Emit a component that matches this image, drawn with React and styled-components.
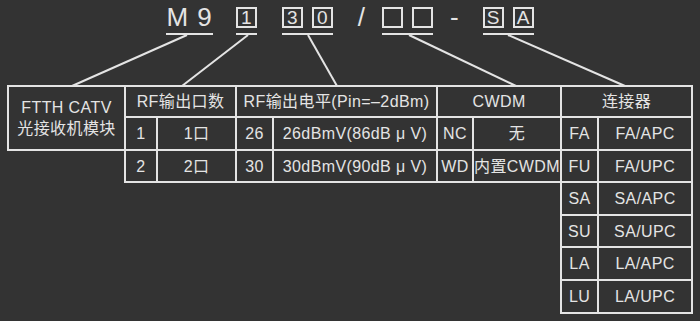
import React from 'react'
import styled, { createGlobalStyle } from 'styled-components';

const ink = '#e4e4e4';
const bg = '#333333';

const Global = createGlobalStyle`
  html, body {
    margin: 0;
    padding: 0;
    background: ${bg};
  }
`;

const Page = styled.div`
  width: 700px;
  height: 321px;
  overflow: hidden;
  background: ${bg};
  color: ${ink};
  font-family: "Liberation Sans", "Noto Sans CJK SC", sans-serif;
`;

const Header = styled.div`
  position: relative;
  height: 85px;
`;

const CodeRow = styled.div`
  display: flex;
  align-items: flex-start;
  justify-content: center;
  padding-top: 7px;
`;

const Segment = styled.div`
  display: flex;
  align-items: center;
  gap: 9px;
  height: 21px;
  padding: 0 0 5px;
  margin-left: ${p => p.$ml || 0}px;
  border-bottom: 2px solid ${ink};
`;

const Code = styled.span`
  font-size: 26px;
  line-height: 21px;
  letter-spacing: 1px;
  white-space: pre;
  margin-left: ${p => p.$ml || 0}px;
`;

const Box = styled.span`
  box-sizing: border-box;
  width: 21px;
  height: 21px;
  border: 2px solid ${ink};
  font-size: 19px;
  line-height: 18px;
  text-align: center;
`;

const Leaders = styled.svg`
  position: absolute;
  left: 0;
  top: 0;
  pointer-events: none;
`;

const Table = styled.table`
  margin-left: 7px;
  border-collapse: collapse;
  table-layout: fixed;
  width: 686px;
`;

const Row = styled.tr`
  height: ${p => p.$h}px;
`;

const Cell = styled.td`
  border: 2px solid ${ink};
  padding: 0;
  font-size: 16px;
  line-height: 21px;
  letter-spacing: 0.4px;
  text-align: center;
  white-space: nowrap;
  overflow: visible;
`;

const Blank = styled.td`
  border: none;
  padding: 0;
`;

const Lead = ({ x1, x2 }) => (
  <line x1={x1} y1={35} x2={x2} y2={86} stroke={ink} strokeWidth="2" />
);

const widths = [117, 32, 79, 37, 164, 36, 88, 37, 94];

const connectors = [
  ['SA', 'SA/APC'],
  ['SU', 'SA/UPC'],
  ['LA', 'LA/APC'],
  ['LU', 'LA/UPC'],
];

const App = () => (
  <Page>
    <Global />
    <Header>
      <CodeRow>
        <Segment><Code>M 9</Code></Segment>
        <Segment $ml={23}><Box>1</Box></Segment>
        <Segment $ml={25}><Box>3</Box><Box>0</Box></Segment>
        <Code $ml={25}>/</Code>
        <Segment $ml={16}><Box /><Box /></Segment>
        <Code $ml={17}>-</Code>
        <Segment $ml={23}><Box>S</Box><Box>A</Box></Segment>
      </CodeRow>
      <Leaders width="700" height="88">
        <Lead x1={187} x2={72} />
        <Lead x1={248} x2={182} />
        <Lead x1={308} x2={337} />
        <Lead x1={409} x2={516} />
        <Lead x1={508} x2={625} />
      </Leaders>
    </Header>
    <Table>
      <colgroup>
        {widths.map((w, i) => <col key={i} style={{ width: w }} />)}
      </colgroup>
      <tbody>
        <Row $h={31}>
          <Cell rowSpan={2}>FTTH CATV<br />光接收机模块</Cell>
          <Cell colSpan={2}>RF输出口数</Cell>
          <Cell colSpan={2}>RF输出电平(Pin=–2dBm)</Cell>
          <Cell colSpan={2}>CWDM</Cell>
          <Cell colSpan={2}>连接器</Cell>
        </Row>
        <Row $h={33}>
          <Cell>1</Cell>
          <Cell>1口</Cell>
          <Cell>26</Cell>
          <Cell>26dBmV(86dB μ V)</Cell>
          <Cell>NC</Cell>
          <Cell>无</Cell>
          <Cell>FA</Cell>
          <Cell>FA/APC</Cell>
        </Row>
        <Row $h={32}>
          <Blank rowSpan={5} />
          <Cell>2</Cell>
          <Cell>2口</Cell>
          <Cell>30</Cell>
          <Cell>30dBmV(90dB μ V)</Cell>
          <Cell>WD</Cell>
          <Cell>内置CWDM</Cell>
          <Cell>FU</Cell>
          <Cell>FA/UPC</Cell>
        </Row>
        {connectors.map(([code, name], i) => (
          <Row key={code} $h={i % 3 === 1 ? 32 : 33}>
            {i === 0 && <Blank colSpan={6} rowSpan={4} />}
            <Cell>{code}</Cell>
            <Cell>{name}</Cell>
          </Row>
        ))}
      </tbody>
    </Table>
  </Page>
)

export default App
